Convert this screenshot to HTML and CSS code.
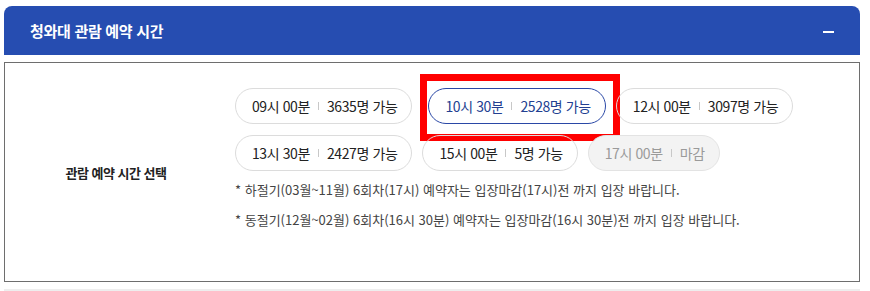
FILE: index.html
```html
<!DOCTYPE html>
<html lang="ko">

<head>
    <meta charset="UTF-8">
    <meta name="viewport" content="width=device-width, initial-scale=1.0">
    <title>청와대 관람 예약 시간</title>
    <link rel="stylesheet" href="styles.css">
</head>

<body>
    <div class="wrap">
        <div class="head">
            <h2 class="head-title">청와대 관람 예약 시간</h2>
            <span class="head-toggle"></span>
        </div>
        <div class="box">
            <div class="box-label">관람 예약 시간 선택</div>
            <div class="box-body">
                <ul class="times">
                    <li class="time"><span>09시 00분</span><i></i><span>3635명 가능</span></li>
                    <li class="time on"><span>10시 30분</span><i></i><span>2528명 가능</span>
                        <b class="mark"></b>
                    </li>
                    <li class="time"><span>12시 00분</span><i></i><span>3097명 가능</span></li>
                    <li class="time"><span>13시 30분</span><i></i><span>2427명 가능</span></li>
                    <li class="time"><span>15시 00분</span><i></i><span>5명 가능</span></li>
                    <li class="time off"><span>17시 00분</span><i></i><span>마감</span></li>
                </ul>
                <p class="note">* 하절기(03월~11월) 6회차(17시) 예약자는 입장마감(17시)전 까지 입장 바랍니다.</p>
                <p class="note">* 동절기(12월~02월) 6회차(16시 30분) 예약자는 입장마감(16시 30분)전 까지 입장 바랍니다.</p>
            </div>
        </div>
        <div class="next"></div>
    </div>
</body>

</html>
```

FILE: styles.css
```css
* {
    margin: 0;
    padding: 0;
    box-sizing: border-box;
}

body {
    background: #fff;
    font-family: "Noto Sans CJK KR", "Noto Sans", sans-serif;
    color: #222;
}

.wrap {
    width: 856px;
    margin-left: 4px;
    padding-top: 6px;
}

.head {
    height: 49px;
    background-color: #264db1;
    border-radius: 8px 8px 0 0;
    display: flex;
    align-items: center;
    justify-content: space-between;
    padding: 0 26px 0 26px;
}

.head-title {
    color: #fff;
    font-size: 15px;
    font-weight: 700;
    letter-spacing: -0.3px;
}

.head-toggle {
    width: 11px;
    height: 2px;
    background: #fff;
    margin-top: 2px;
}

.box {
    margin-top: 7px;
    height: 220px;
    border: 1px solid #6e6e6e;
    display: flex;
}

.box-label {
    width: 222px;
    display: flex;
    align-items: center;
    justify-content: center;
    font-size: 13px;
    font-weight: 700;
    letter-spacing: -0.5px;
    color: #222;
}

.box-body {
    padding: 25px 0 0 8px;
}

.times {
    list-style: none;
    display: flex;
    flex-wrap: wrap;
    gap: 11px 10px;
    width: 570px;
    margin-bottom: 4px;
}

.time {
    position: relative;
    height: 36px;
    padding: 0 14px 0 16px;
    border: 1px solid #dcdcdc;
    border-radius: 18px;
    display: flex;
    align-items: center;
    font-size: 14px;
    letter-spacing: -0.4px;
    color: #222;
}

.time i {
    width: 1px;
    height: 8px;
    background: #c8c8c8;
    margin: 0 8px;
}

.time.on {
    border-color: #2a48a6;
    color: #233f91;
    margin-left: 6px;
}

.time.off {
    background: #f3f3f3;
    border-color: #e3e3e3;
    color: #9a9a9a;
}

.mark {
    position: absolute;
    left: -9px;
    top: -15px;
    width: 200px;
    height: 67px;
    border: 7px solid #ff0000;
}

.note {
    font-size: 13px;
    line-height: 30px;
    letter-spacing: 0;
    color: #444;
}

.next {
    margin-top: 7px;
    border-top: 2px solid #eeeeee;
}
```
